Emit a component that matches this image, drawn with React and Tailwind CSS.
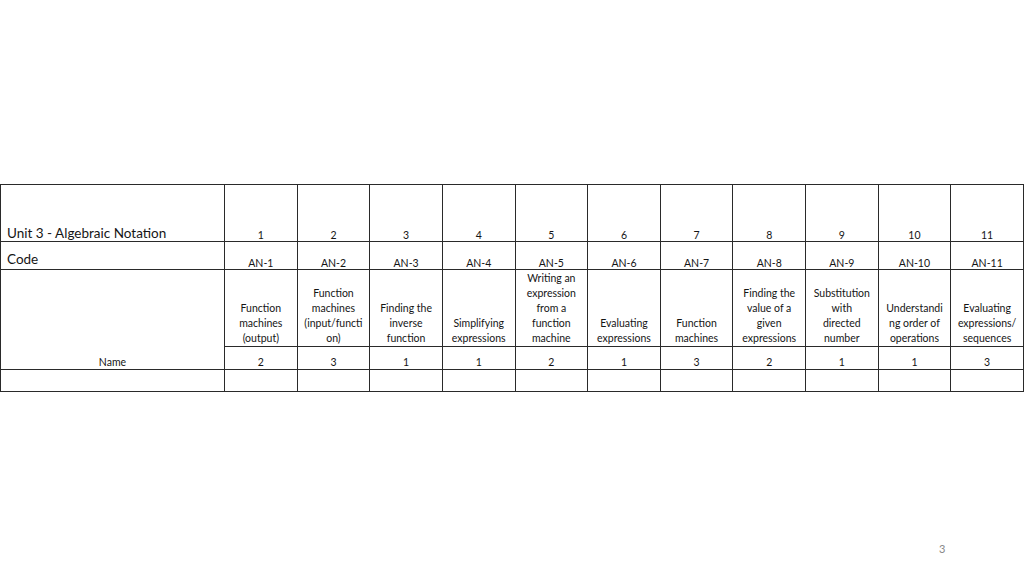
import React from "react";

const cols = [
  { n: "1", code: "AN-1", name: ["Function", "machines", "(output)"], v: "2" },
  { n: "2", code: "AN-2", name: ["Function", "machines", "(input/functi", "on)"], v: "3" },
  { n: "3", code: "AN-3", name: ["Finding the", "inverse", "function"], v: "1" },
  { n: "4", code: "AN-4", name: ["Simplifying", "expressions"], v: "1" },
  { n: "5", code: "AN-5", name: ["Writing an", "expression", "from a", "function", "machine"], v: "2" },
  { n: "6", code: "AN-6", name: ["Evaluating", "expressions"], v: "1" },
  { n: "7", code: "AN-7", name: ["Function", "machines"], v: "3" },
  { n: "8", code: "AN-8", name: ["Finding the", "value of a", "given", "expressions"], v: "2" },
  { n: "9", code: "AN-9", name: ["Substitution", "with", "directed", "number"], v: "1" },
  { n: "10", code: "AN-10", name: ["Understandi", "ng order of", "operations"], v: "1" },
  { n: "11", code: "AN-11", name: ["Evaluating", "expressions/", "sequences"], v: "3" },
];

const bd = "border border-[#2a2a2a]";

export default function App() {
  return (
    <div
      className="w-[1024px] h-[576px] bg-white relative overflow-hidden text-[#151515]"
      style={{ fontFamily: "Lato, 'Open Sans', sans-serif" }}
    >
      <div className="pt-[184px]">
        <table className="table-fixed border-collapse w-[1024px]">
          <colgroup>
            <col className="w-[224px]" />
            {cols.map((c) => (
              <col key={c.n} />
            ))}
          </colgroup>
          <tbody>
            <tr className="h-[57px]">
              <td className={`${bd} align-bottom pl-[6px] pb-0 text-[13.5px] leading-[16px]`}>
                Unit 3 - Algebraic Notation
              </td>
              {cols.map((c) => (
                <td key={c.n} className={`${bd} align-bottom text-center text-[10.5px] leading-[12px] pb-0`}>
                  {c.n}
                </td>
              ))}
            </tr>
            <tr className="h-[28px]">
              <td className={`${bd} align-bottom pl-[6px] pb-[2px] text-[13.5px] leading-[16px]`}>Code</td>
              {cols.map((c) => (
                <td key={c.n} className={`${bd} align-bottom text-center text-[10.5px] leading-[12px] pb-0`}>
                  {c.code}
                </td>
              ))}
            </tr>
            <tr className="h-[77px]">
              <td rowSpan={2} className={`${bd} align-bottom text-center text-[10.5px] leading-[13px] pb-0`}>
                Name
              </td>
              {cols.map((c) => (
                <td key={c.n} className={`${bd} align-bottom text-center text-[10.5px] leading-[15px] pb-0 px-0 whitespace-nowrap`}>
                  {c.name.map((l, i) => (
                    <div key={i}>{l}</div>
                  ))}
                </td>
              ))}
            </tr>
            <tr className="h-[23px]">
              {cols.map((c) => (
                <td key={c.n} className={`${bd} align-bottom text-center text-[10.5px] leading-[13px] pb-0`}>
                  {c.v}
                </td>
              ))}
            </tr>
            <tr className="h-[22px]">
              <td className={bd}></td>
              {cols.map((c) => (
                <td key={c.n} className={bd}></td>
              ))}
            </tr>
          </tbody>
        </table>
      </div>
      <div className="absolute left-[939px] top-[541px] text-[11px] text-[#888]">3</div>
    </div>
  );
}
